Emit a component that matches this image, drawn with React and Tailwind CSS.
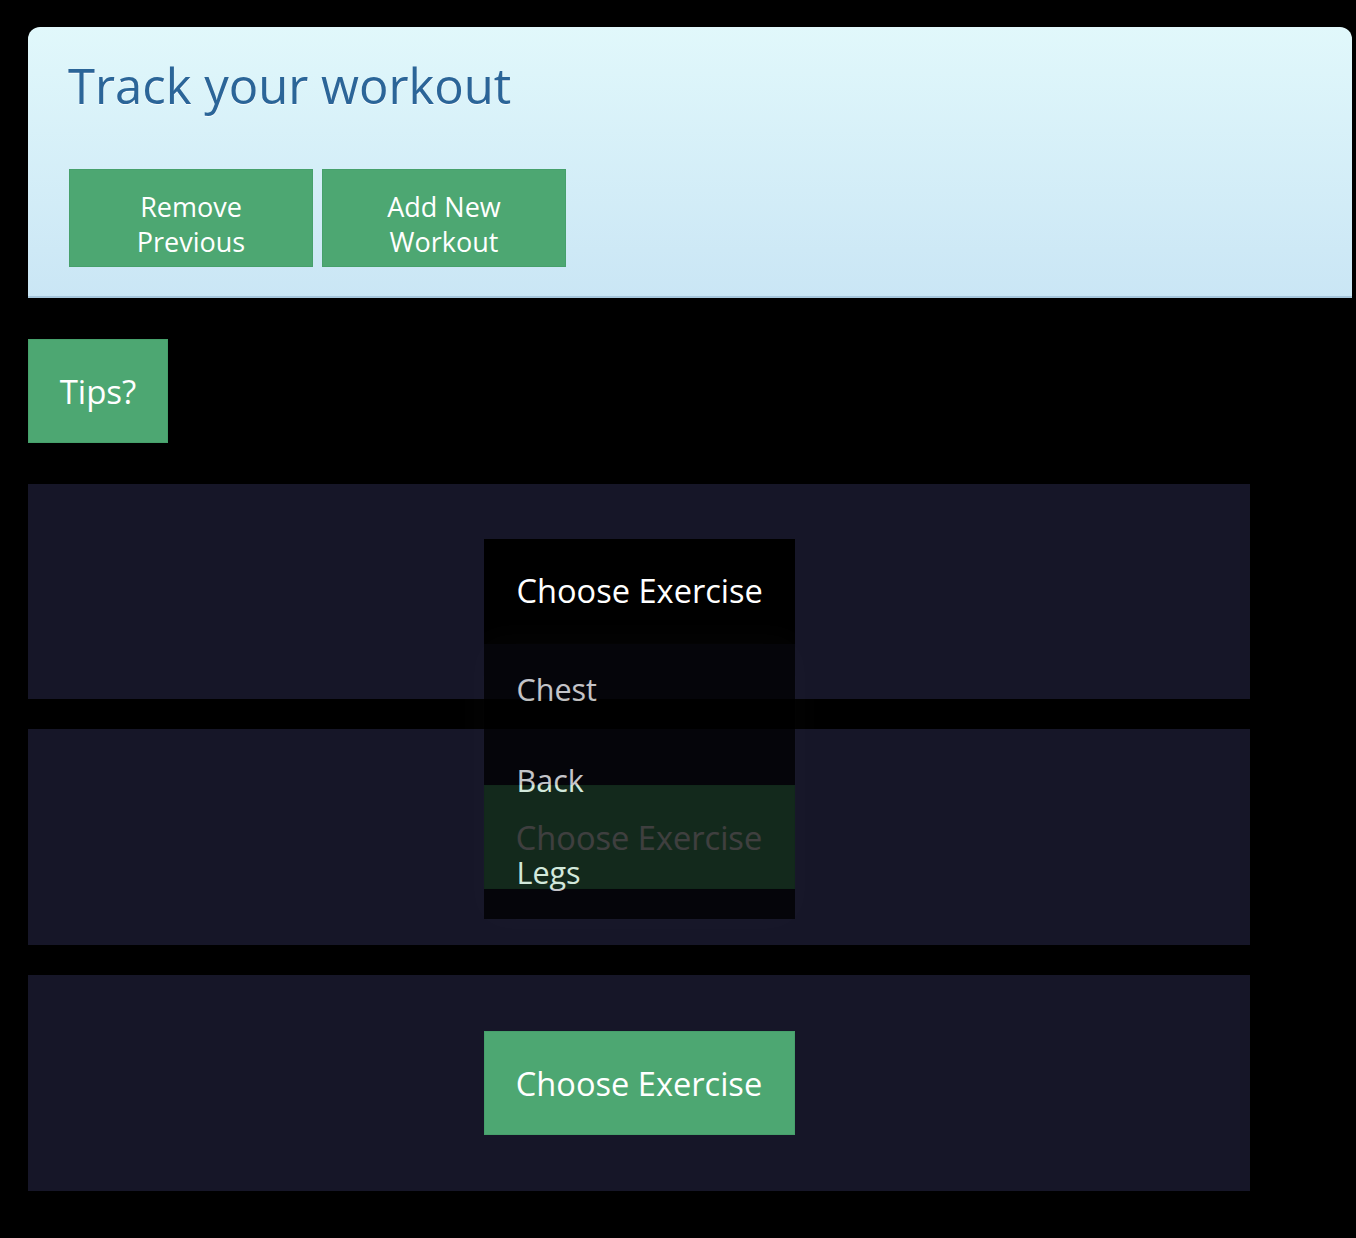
import React from "react";

const font = { fontFamily: '"Open Sans", "Noto Sans", sans-serif' };

function GreenButton({ children, className = "" }) {
  return (
    <button
      className={`bg-[#4da772] border border-[#46a06b] text-white leading-[35px] ${className}`}
      style={font}
    >
      {children}
    </button>
  );
}

export default function App() {
  return (
    <div className="min-h-[1238px] bg-black pl-[28px] pt-[27px] pb-[47px]" style={font}>
      <header className="w-[1324px] h-[271px] rounded-t-[12px] bg-gradient-to-b from-[#e1f8fb] to-[#cae6f5] border-b-2 border-[#a6c6dc] pl-[40px] pt-[26px]">
        <h1 className="text-[49px] leading-[64px] text-[#2b6598] [text-shadow:0_1px_0_rgba(255,255,255,0.8)]">
          Track your workout
        </h1>
        <div className="flex gap-[9px] mt-[52px] ml-[1px]">
          <GreenButton className="w-[244px] h-[98px] text-[27px] pt-[12px]">
            Remove
            <br />
            Previous
          </GreenButton>
          <GreenButton className="w-[244px] h-[98px] text-[27px] pt-[12px]">
            Add New
            <br />
            Workout
          </GreenButton>
        </div>
      </header>

      <div className="mt-[41px]">
        <GreenButton className="w-[140px] h-[104px] text-[33px]">Tips?</GreenButton>
      </div>

      <div className="mt-[41px] w-[1222px] flex flex-col gap-[30px]">
        <section className="h-[215px] bg-[#161628] flex items-center justify-center">
          <div className="relative z-10">
            <button
              className="w-[311px] h-[105px] bg-black text-white text-[32.6px] text-left pl-[33px]"
              style={font}
            >
              Choose Exercise
            </button>
            <ul className="absolute left-0 top-full w-[311px] bg-black opacity-75 shadow-[0_0_40px_10px_rgba(255,255,255,0.025)]">
              {["Chest", "Back", "Legs"].map((t) => (
                <li
                  key={t}
                  className="h-[91.5px] flex items-center pl-[33px] text-[30.5px] text-white"
                >
                  {t}
                </li>
              ))}
            </ul>
          </div>
        </section>
        <section className="h-[216px] bg-[#161628] flex items-center justify-center">
          <GreenButton className="w-[311px] h-[104px] text-[32.6px]">Choose Exercise</GreenButton>
        </section>
        <section className="h-[216px] bg-[#161628] flex items-center justify-center">
          <GreenButton className="w-[311px] h-[104px] text-[32.6px]">Choose Exercise</GreenButton>
        </section>
      </div>
    </div>
  );
}
